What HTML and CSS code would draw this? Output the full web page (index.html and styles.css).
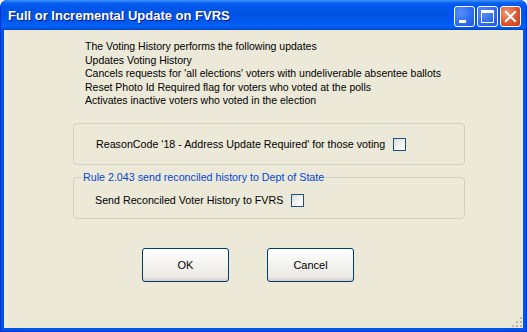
FILE: index.html
```html
<!DOCTYPE html>
<html lang="en">
<head>
  <meta charset="UTF-8" />
  <title>Full or Incremental Update on FVRS</title>
  <link rel="stylesheet" href="styles.css">
</head>
<body>

  <div class="window">
    <div class="titlebar">
      <span class="title">Full or Incremental Update on FVRS</span>
      <div class="controls">
        <span class="ctl min"><i></i></span>
        <span class="ctl max"><i></i></span>
        <span class="ctl close">
          <svg width="13" height="13" viewBox="0 0 13 13">
            <path d="M2 2 L11 11 M11 2 L2 11" stroke="white" stroke-width="2.2" stroke-linecap="square"/>
          </svg>
        </span>
      </div>
    </div>

    <div class="client">
      <div class="info">
        <p>The Voting History performs the following updates</p>
        <p>Updates Voting History</p>
        <p>Cancels requests for 'all elections' voters with undeliverable absentee ballots</p>
        <p>Reset Photo Id Required flag for voters who voted at the polls</p>
        <p>Activates inactive voters who voted in the election</p>
      </div>

      <div class="group plain">
        <label class="check-row">
          ReasonCode '18 - Address Update Required' for those voting
          <span class="checkbox"></span>
        </label>
      </div>

      <fieldset class="group framed">
        <legend>Rule 2.043 send reconciled history to Dept of State</legend>
        <label class="check-row">
          Send Reconciled Voter History to FVRS
          <span class="checkbox"></span>
        </label>
      </fieldset>

      <div class="buttons">
        <button class="btn">OK</button>
        <button class="btn">Cancel</button>
      </div>

      <div class="grip"></div>
    </div>
  </div>

</body>
</html>
```

FILE: styles.css
```css
* {
  margin: 0;
  padding: 0;
  box-sizing: border-box;
}

body {
  width: 527px;
  height: 332px;
  overflow: hidden;
  background: #ffffff;
  font-family: "Liberation Sans", Arial, sans-serif;
  font-size: 10.5px;
  color: #000;
}

.window {
  width: 527px;
  height: 332px;
  display: flex;
  flex-direction: column;
  background: #0055e5;
  border-radius: 7px 7px 0 0;
  border: 1px solid #0831d9;
  border-top: none;
  overflow: hidden;
}

/* title bar */

.titlebar {
  height: 30px;
  flex-shrink: 0;
  display: flex;
  align-items: center;
  justify-content: space-between;
  padding: 0 5px 0 7px;
  background: linear-gradient(to bottom,
    #3d95ff 0px, #0a5fef 3px, #0058ee 6px, #0054e3 14px,
    #0058ee 22px, #0062f7 26px, #0051d9 29px, #0042c2 30px);
  border-radius: 7px 7px 0 0;
}

.title {
  color: #fff;
  font-family: "Liberation Sans", Arial, sans-serif;
  font-weight: bold;
  font-size: 13px;
  text-shadow: 1px 1px 0 #0a1883;
  margin-top: 1px;
}

.controls {
  display: flex;
  gap: 2px;
  margin-top: 3px;
}

.ctl {
  width: 21px;
  height: 21px;
  border: 1px solid #fff;
  border-radius: 3px;
  display: flex;
  align-items: center;
  justify-content: center;
  background: radial-gradient(circle at 30% 30%, #5a8dfb 0%, #2f6df0 55%, #1f56d8 100%);
}

.ctl.min i {
  width: 7px;
  height: 3px;
  background: #fff;
  margin-top: 9px;
  margin-right: 4px;
}

.ctl.max i {
  width: 13px;
  height: 13px;
  border: 1px solid #fff;
  border-top-width: 3px;
}

.ctl.close {
  background: radial-gradient(circle at 30% 30%, #f09b7c 0%, #e0532f 55%, #c5401f 100%);
}

/* client area */

.client {
  flex: 1;
  margin: 0 3px 3px 3px;
  background: #ece9d8;
  position: relative;
  padding-top: 10px;
}

.info {
  margin-left: 81px;
  line-height: 13.5px;
}

.group {
  margin-left: 69px;
  width: 392px;
  border: 1px solid #d0d0bf;
  border-radius: 4px;
  font-size: 10.7px;
}

.group.plain {
  margin-top: 15.5px;
  height: 42px;
  display: flex;
  align-items: center;
  padding-left: 22px;
  padding-top: 1px;
}

.group.framed {
  margin-top: 6px;
  height: 48px;
  padding-left: 8px;
}

.group legend {
  color: #0046d5;
  padding: 0 1px;
  line-height: 13px;
}

.framed .check-row {
  margin-left: 13px;
  margin-top: 10px;
}

.check-row {
  display: flex;
  align-items: center;
  gap: 8px;
  line-height: 13px;
}

.checkbox {
  width: 13px;
  height: 13px;
  border: 1px solid #1c5180;
  background: linear-gradient(135deg, #dcdcd7 0%, #f5f5f3 60%, #ffffff 100%);
}

.buttons {
  display: flex;
  gap: 38px;
  margin-left: 138px;
  margin-top: 29px;
}

.btn {
  width: 87px;
  height: 34px;
  border: 1px solid #003c74;
  border-radius: 3px;
  background: linear-gradient(to bottom, #ffffff 0%, #f5f5f1 40%, #ecebe6 85%, #d6d0c5 100%);
  font-family: "Liberation Sans", Arial, sans-serif;
  font-size: 11px;
  color: #000;
}

.grip {
  position: absolute;
  right: 1px;
  bottom: 1px;
  width: 11px;
  height: 11px;
  background:
    radial-gradient(circle, #b5b29f 1.2px, transparent 1.3px) 0 0 / 4px 4px;
  clip-path: polygon(100% 0, 100% 100%, 0 100%);
}
```
